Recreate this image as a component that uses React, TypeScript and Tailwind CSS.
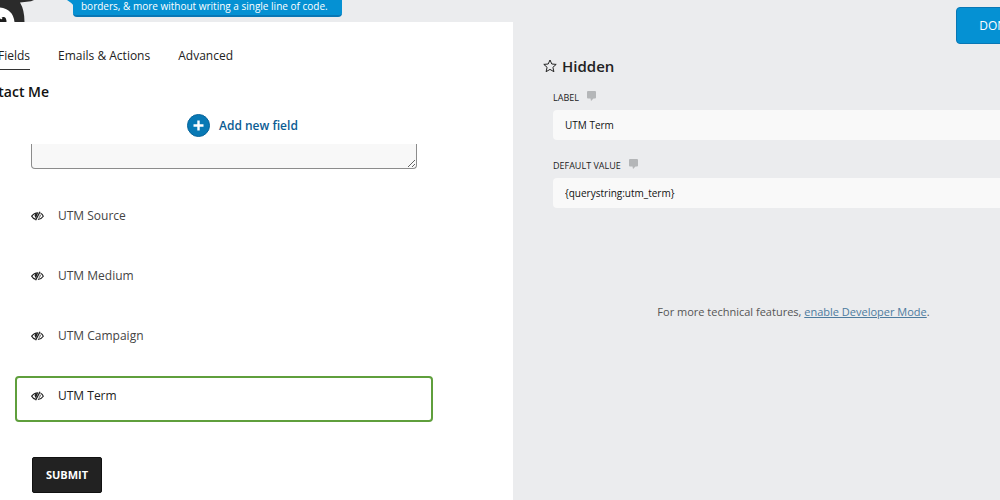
interface HiddenField {
    label: string;
    active?: boolean;
}

const tabs = ["Fields", "Emails & Actions", "Advanced"];

const hiddenFields: HiddenField[] = [
    { label: "UTM Source" },
    { label: "UTM Medium" },
    { label: "UTM Campaign" },
    { label: "UTM Term", active: true },
];

function Mascot() {
    return (
        <svg className="h-[22px] w-[34px] shrink-0" viewBox="0 0 34 22" aria-hidden="true">
            <path d="M0 0H34L31 1.200L20 2.500Q24.500 10 24.500 22H0Z" fill="#2b2b2b" />
            <path d="M0 7.500Q13 9 14.500 22H0Z" fill="#fff" />
            <path d="M0 19Q1.500 16.500 4 17Q6.500 17.500 6.500 22H0Z" fill="#1d1d1d" />
            <circle cx="1.300" cy="18.200" r="1" fill="#fff" />
        </svg>
    );
}

function EyeSlash() {
    return (
        <svg className="h-3 w-[13px] shrink-0" viewBox="0 0 13 12" fill="none" stroke="currentColor" aria-hidden="true">
            <path d="M4.800 9.300Q2 8.700.700 6.200Q2.800 3 7.200 2.800" strokeWidth="1.200" />
            <path d="M9.600 3.300Q11.400 4.300 12.300 6.200Q10.500 9 6.900 9.500" strokeWidth="1.100" />
            <path d="M7 3.200Q3.800 2.900 3.600 5.600Q3.700 7.400 5 8.300Z" fill="currentColor" stroke="none" />
            <path d="M9 1.700L4.600 10.300" strokeWidth="1.300" />
            <path d="M9.300 4.800Q9.600 7 7.500 8" strokeWidth=".8" />
        </svg>
    );
}

function HelpBubble() {
    return (
        <svg className="h-[10px] w-[9px] shrink-0" viewBox="0 0 9 10" fill="#b4b6b8" aria-hidden="true">
            <path d="M1 0H8Q9 0 9 1V6.500Q9 7.500 8 7.500H6.500L4 10L3.500 7.500H1Q0 7.500 0 6.500V1Q0 0 1 0Z" />
        </svg>
    );
}

function FieldRow({ field }: { field: HiddenField }) {
    return (
        <li className={`flex h-[46px] items-start gap-[14px] rounded-sm border-2 px-[14px] pt-2 ${field.active ? "border-[#5f9f3c] text-[#222]" : "border-transparent text-[#444]"}`}>
            <span className="flex h-5 items-center text-[#222]">
                <EyeSlash />
            </span>
            <span className="text-[12px] leading-5">{field.label}</span>
        </li>
    );
}

function Setting({ id, label, value }: { id: string; label: string; value: string }) {
    return (
        <div>
            <div className="flex h-4 items-center gap-2">
                <label htmlFor={id} className="text-[9px] leading-4 text-[#222]">
                    {label}
                </label>
                <span className="flex h-4 items-start pt-px">
                    <HelpBubble />
                </span>
            </div>
            <input id={id} defaultValue={value} className="mt-1 h-[30px] w-full rounded-l-sm bg-[#f9f9f9] px-3 text-[10px] text-[#111] outline-none" />
        </div>
    );
}

export default function App() {
    return (
        <div className="grid min-h-screen grid-cols-[513fr_487fr] overflow-hidden bg-[#ebecee] font-['Open_Sans','Noto_Sans',sans-serif]">
            <div className="flex min-w-0 flex-col">
                <header className="flex h-[22px] items-start gap-[39px] overflow-hidden">
                    <Mascot />
                    <div className="relative h-[17px] rounded-b border-b-2 border-[#0877b5] bg-[#0591d3] pr-[14px] pl-2 text-[10px] leading-3 whitespace-nowrap text-white">
                        <svg className="absolute top-0 -left-[6px] h-[6px] w-[7px]" viewBox="0 0 7 6" fill="#0591d3" aria-hidden="true">
                            <path d="M0 0H7V6Q5 3 0 0Z" />
                        </svg>
                        borders, &amp; more without writing a single line of code.
                    </div>
                </header>

                <main className="flex-1 bg-white pb-2">
                    <nav className="flex gap-7 pt-6">
                        {tabs.map((tab, index) => (
                            <a key={tab} href="#" className={`h-6 text-[12px] leading-5 whitespace-nowrap text-[#222] ${index === 0 ? "-ml-0.5 border-b border-[#333]" : ""}`}>
                                {tab}
                            </a>
                        ))}
                    </nav>
                    <h1 className="mt-3 -ml-7 text-[14px] leading-5 font-semibold text-[#111]">Contact Me</h1>
                    <div className="mt-3 pl-[187px]">
                        <button type="button" className="flex items-center gap-[9px] text-[12px] leading-5 font-semibold text-[#0b5c93]">
                            <svg className="h-[23px] w-[23px]" viewBox="0 0 23 23" aria-hidden="true">
                                <circle cx="11.500" cy="11.500" r="11" fill="#0879b5" stroke="#07649b" />
                                <path d="M11.500 6.500V16.500M6.500 11.500H16.500" stroke="#fff" strokeWidth="2.400" />
                            </svg>
                            Add new field
                        </button>
                    </div>
                    <div className="mt-[7px] mr-24 ml-[31px]">
                        <textarea aria-label="Message" className="block h-[25px] w-full resize rounded-b-sm border border-t-0 border-[#8c8c8c] bg-[#f8f8f8] outline-none" />
                    </div>
                    <ul className="mt-[27px] mr-20 ml-[15px] flex flex-col gap-[14px]">
                        {hiddenFields.map((field) => (
                            <FieldRow key={field.label} field={field} />
                        ))}
                    </ul>
                    <button type="button" className="mt-[35px] ml-8 h-9 w-[70px] rounded-xs border border-[#111] bg-[#222] text-[11px] font-bold text-white">
                        SUBMIT
                    </button>
                </main>
            </div>

            <aside className="min-w-0 pt-[7px]">
                <div className="-mr-9 flex justify-end">
                    <button type="button" className="h-[37px] rounded-sm border border-[#0877b5] bg-[#0591d3] px-[22px] text-[12px] text-white">
                        DONE
                    </button>
                </div>
                <h2 className="mt-[10px] ml-[30px] flex items-center gap-[5px] text-[15px] leading-6 font-semibold text-[#222]">
                    <svg className="h-[14px] w-[14px]" viewBox="0 0 14 14" fill="none" stroke="currentColor" strokeLinejoin="round" aria-hidden="true">
                        <path d="M7 1L8.800 5L13.200 5.400L9.900 8.300L10.900 12.700L7 10.400L3.100 12.700L4.100 8.300L.8 5.400L5.200 5Z" />
                    </svg>
                    Hidden
                </h2>
                <div className="mt-3 ml-10 flex flex-col gap-[18px]">
                    <Setting id="label" label="LABEL" value="UTM Term" />
                    <Setting id="default-value" label="DEFAULT VALUE" value="{querystring:utm_term}" />
                </div>
                <p className="mt-[94px] pr-[60px] pl-[134px] text-center text-[11px] leading-5 whitespace-nowrap text-[#555]">
                    For more technical features,{" "}
                    <a href="#" className="text-[#4d7b9e] underline">
                        enable Developer Mode
                    </a>
                    .
                </p>
            </aside>
        </div>
    );
}
